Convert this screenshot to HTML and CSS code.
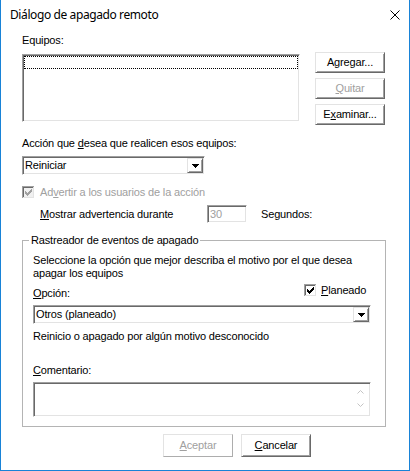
FILE: index.html
```html
<!DOCTYPE html>
<html lang="es">
<head>
<meta charset="utf-8">
<title>Diálogo de apagado remoto</title>
<link rel="stylesheet" href="styles.css">
</head>
<body>
<div class="window">
  <div class="titlebar">
    <span class="title">Diálogo de apagado remoto</span>
    <svg class="close" width="10" height="10" viewBox="0 0 10 10"><path d="M0.5 0.5L9.5 9.5M9.5 0.5L0.5 9.5" stroke="#000" stroke-width="1" fill="none"/></svg>
  </div>
  <div class="content">
    <div class="top-row">
      <div class="list-col">
        <div class="label">Equipos:</div>
        <div class="listbox sunken"><div class="focus-item"></div></div>
      </div>
      <div class="btn-col">
        <div class="btn">Agre<u>g</u>ar...</div>
        <div class="btn disabled"><u>Q</u>uitar</div>
        <div class="btn">E<u>x</u>aminar...</div>
      </div>
    </div>

    <div class="label action-label">Acción que <u>d</u>esea que realicen esos equipos:</div>
    <div class="combo sunken action-combo">
      <span class="combo-value">Reiniciar</span>
      <span class="drop"><svg width="7" height="4" viewBox="0 0 7 4" shape-rendering="crispEdges"><path d="M0 0h7v1h-1v1h-1v1h-1v1h-1v-1h-1v-1h-1v-1h-1z" fill="#000"/></svg></span>
    </div>

    <div class="check-row warn-row">
      <svg class="checkbox" width="13" height="13" viewBox="0 0 13 13" shape-rendering="crispEdges">
        <rect x="0" y="0" width="13" height="13" fill="#fff"/>
        <rect x="2" y="2" width="9" height="9" fill="#f0f0f0"/>
        <path d="M0 0h12v1h-11v11h-1z" fill="#a0a0a0"/>
        <path d="M1 1h10v1h-9v9h-1z" fill="#696969"/>
        <path d="M11 1h1v11h-11v-1h10z" fill="#e3e3e3"/>
        <path d="M3 5h1v3h-1zM4 6h1v3h-1zM5 7h1v3h-1zM6 6h1v3h-1zM7 5h1v3h-1zM8 4h1v3h-1zM9 3h1v3h-1z" fill="#a0a0a0"/>
      </svg>
      <span class="disabled-text">Ad<u>v</u>ertir a los usuarios de la acción</span>
    </div>

    <div class="timer-row">
      <span class="timer-label"><u>M</u>ostrar advertencia durante</span>
      <span class="spin sunken">30</span>
      <span class="unit">Segundos:</span>
    </div>

    <fieldset class="group">
      <legend class="group-title">Rastreador de eventos de apagado</legend>
      <p class="desc">Seleccione la opción que mejor describa el motivo por el que desea<br>apagar los equipos</p>
      <div class="opt-row">
        <span class="opt-label"><u>O</u>pción:</span>
        <span class="check-row planned">
          <svg class="checkbox" width="13" height="13" viewBox="0 0 13 13" shape-rendering="crispEdges">
            <rect x="0" y="0" width="13" height="13" fill="#fff"/>
            <path d="M0 0h12v1h-11v11h-1z" fill="#a0a0a0"/>
            <path d="M1 1h10v1h-9v9h-1z" fill="#696969"/>
            <path d="M11 1h1v11h-11v-1h10z" fill="#e3e3e3"/>
            <path d="M3 5h1v3h-1zM4 6h1v3h-1zM5 7h1v3h-1zM6 6h1v3h-1zM7 5h1v3h-1zM8 4h1v3h-1zM9 3h1v3h-1z" fill="#000"/>
          </svg>
          <span><u>P</u>laneado</span>
        </span>
      </div>
      <div class="combo sunken reason-combo">
        <span class="combo-value">Otros (planeado)</span>
        <span class="drop"><svg width="7" height="4" viewBox="0 0 7 4" shape-rendering="crispEdges"><path d="M0 0h7v1h-1v1h-1v1h-1v1h-1v-1h-1v-1h-1v-1h-1z" fill="#000"/></svg></span>
      </div>
      <p class="reason">Reinicio o apagado por algún motivo desconocido</p>
      <div class="label comment-label"><u>C</u>omentario:</div>
      <div class="comment sunken">
        <div class="vscroll">
          <svg width="7" height="5" viewBox="0 0 7 5"><path d="M0.5 4.5L3.5 1.5L6.5 4.5" stroke="#c4c4c4" stroke-width="1" fill="none"/></svg>
          <svg width="7" height="5" viewBox="0 0 7 5"><path d="M0.5 0.5L3.5 3.5L6.5 0.5" stroke="#c4c4c4" stroke-width="1" fill="none"/></svg>
        </div>
      </div>
    </fieldset>

    <div class="dialog-buttons">
      <div class="btn btn-lg disabled muted"><u>A</u>ceptar</div>
      <div class="btn btn-lg"><u>C</u>ancelar</div>
    </div>
  </div>
</div>
</body>
</html>
```

FILE: styles.css
```css
* {
  box-sizing: border-box;
}

html,
body {
  margin: 0;
  padding: 0;
  background: #fff;
}

body {
  font-family: "Liberation Sans", Arial, sans-serif;
  font-size: 11px;
  line-height: 13px;
  letter-spacing: -0.16px;
  color: #000;
}

u {
  text-underline-offset: 1px;
}

.window {
  width: 410px;
  height: 471px;
  background: #fff;
  border: 1px solid #1883d7;
  border-top: 0;
}

.titlebar {
  height: 30px;
  display: flex;
  align-items: center;
  justify-content: space-between;
  padding: 0 9px;
}

.title {
  font-family: "Noto Sans", sans-serif;
  font-size: 12px;
  line-height: 16px;
  letter-spacing: -0.4px;
}

.close {
  display: block;
}

.content {
  padding: 4px 0 0 21px;
}

.label {
  height: 13px;
  white-space: nowrap;
}

.sunken {
  background: #fff;
  border: 1px solid;
  border-color: #a0a0a0 #fff #fff #a0a0a0;
  box-shadow: inset 1px 1px #696969, inset -1px -1px #e3e3e3;
  padding: 1px;
}

.btn {
  width: 70px;
  height: 21px;
  background: #fff;
  border: 1px solid;
  border-color: #e3e3e3 #696969 #696969 #e3e3e3;
  box-shadow: inset 1px 1px #fff, inset -1px -1px #a0a0a0;
  display: flex;
  align-items: center;
  justify-content: center;
  white-space: nowrap;
}

.btn.disabled {
  color: #a0a0a0;
}

.btn.muted {
  border-color: #e3e3e3 #adadad #adadad #e3e3e3;
  box-shadow: none;
}

.btn-lg {
  height: 23px;
}

/* top section */
.top-row {
  display: flex;
  align-items: flex-start;
}

.list-col {
  width: 278px;
}

.listbox {
  margin-top: 7px;
  height: 68px;
}

.focus-item {
  height: 13px;
  border: 1px dotted #000;
}

.btn-col {
  margin-left: 15px;
  padding-top: 18px;
  display: flex;
  flex-direction: column;
  gap: 5px;
}

/* action */
.action-label {
  margin-top: 12px;
}

.combo {
  height: 19px;
  display: flex;
  align-items: stretch;
}

.combo-value {
  flex: 1;
  padding-left: 1px;
  display: flex;
  align-items: center;
  white-space: nowrap;
}

.drop {
  width: 16px;
  background: #fff;
  border: 1px solid;
  border-color: #e3e3e3 #696969 #696969 #e3e3e3;
  box-shadow: inset 1px 1px #fff, inset -1px -1px #a0a0a0;
  display: flex;
  align-items: center;
  justify-content: center;
}

.drop svg {
  display: block;
}

.action-combo {
  width: 183px;
  margin-top: 6px;
}

.check-row {
  display: flex;
  align-items: center;
  gap: 5px;
  height: 13px;
  white-space: nowrap;
}

.checkbox {
  display: block;
  flex: none;
}

.warn-row {
  margin-top: 11px;
}

.disabled-text {
  color: #a0a0a0;
}

.timer-row {
  margin-top: 6px;
  padding-left: 18px;
  display: flex;
  align-items: center;
  height: 18px;
  white-space: nowrap;
}

.timer-label {
  width: 167px;
}

.spin {
  width: 40px;
  height: 18px;
  color: #a0a0a0;
  display: flex;
  align-items: center;
  padding-left: 2px;
}

.unit {
  margin-left: 14px;
}

/* group */
.group {
  margin: 11px 0 0 0;
  width: 364px;
  border: 1px solid #b4b4b4;
  padding: 7px 13px 9px 10px;
  min-inline-size: 0;
}

.group-title {
  padding: 0 2px;
  margin-left: -4px;
  line-height: 13px;
  white-space: nowrap;
}

.desc {
  margin: 0;
  white-space: nowrap;
}

.opt-row {
  margin-top: 4px;
  height: 16px;
  display: grid;
  grid-template-columns: 271px auto;
  align-items: start;
}

.opt-label {
  margin-top: 3px;
  line-height: 13px;
}

.planned {
  gap: 4px;
}

.reason-combo {
  width: 338px;
  margin-top: 5px;
}

.reason {
  margin: 6px 0 0 0;
  white-space: nowrap;
}

.comment-label {
  margin-top: 21px;
}

.comment {
  margin-top: 5px;
  width: 338px;
  height: 35px;
  display: flex;
  justify-content: flex-end;
}

.vscroll {
  width: 17px;
  display: flex;
  flex-direction: column;
  align-items: center;
  padding-top: 5px;
  gap: 9px;
}

.vscroll svg {
  display: block;
}

/* bottom buttons */
.dialog-buttons {
  margin-top: 7px;
  padding-left: 141px;
  display: flex;
  gap: 8px;
}
```
